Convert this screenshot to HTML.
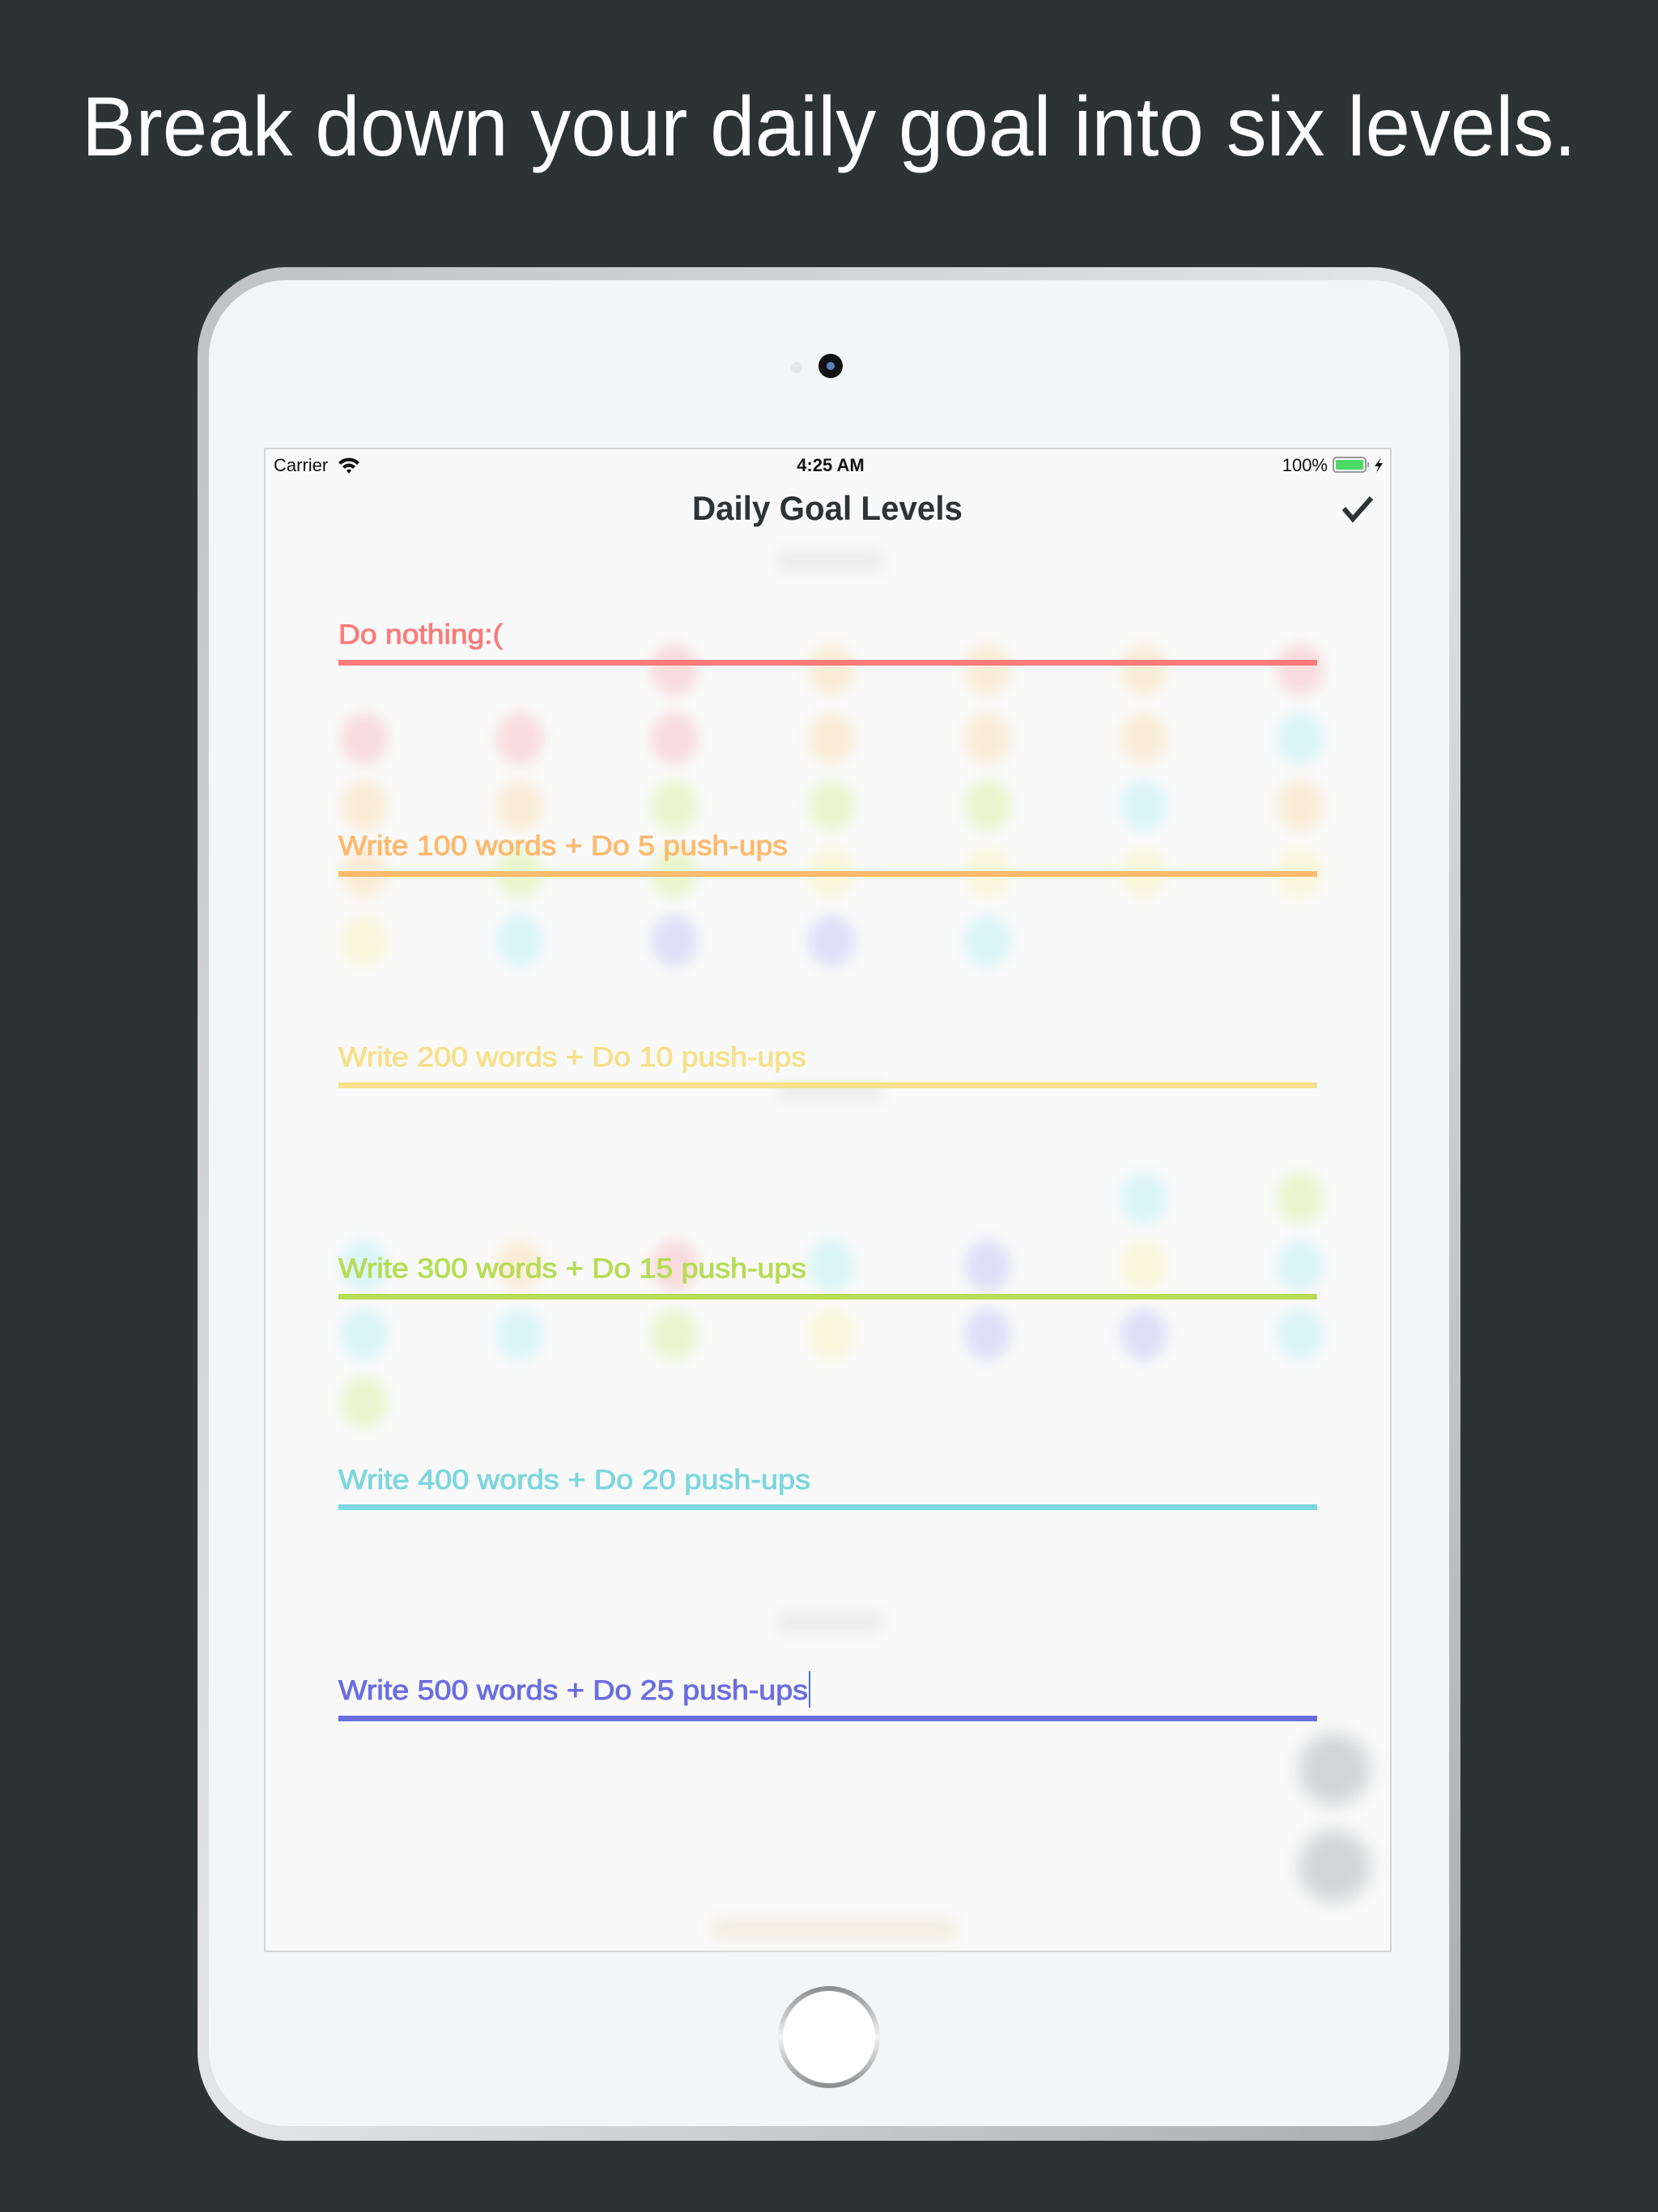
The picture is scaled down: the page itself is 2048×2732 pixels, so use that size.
<!DOCTYPE html>
<html><head><meta charset="utf-8"><style>
html,body{margin:0;padding:0}
body{width:2048px;height:2732px;background:#2c3335;position:relative;overflow:hidden;font-family:"Liberation Sans",sans-serif}
.abs{position:absolute}
</style></head><body>
<svg class="abs" style="left:0;top:0" width="2048" height="2732" viewBox="0 0 2048 2732">
<defs>
<linearGradient id="frame" x1="0" y1="0" x2="1" y2="1">
<stop offset="0" stop-color="#bfc1c3"/><stop offset="0.5" stop-color="#e4e5e6"/><stop offset="1" stop-color="#a9abad"/>
</linearGradient>
<linearGradient id="ring" x1="0" y1="0" x2="0" y2="1">
<stop offset="0" stop-color="#8a8b8d"/><stop offset="0.5" stop-color="#f2f2f2"/><stop offset="1" stop-color="#8a8b8d"/>
</linearGradient>
<filter id="bl" x="-50%" y="-50%" width="200%" height="200%"><feGaussianBlur stdDeviation="8"/></filter>
<filter id="bl2" x="-50%" y="-50%" width="200%" height="200%"><feGaussianBlur stdDeviation="11"/></filter>
</defs>
<text x="1024" y="192" text-anchor="middle" font-family="Liberation Sans" font-size="104" fill="#ffffff" textLength="1846" lengthAdjust="spacingAndGlyphs">Break down your daily goal into six levels.</text>
<rect x="244" y="330" width="1560" height="2314" rx="110" fill="url(#frame)"/>
<rect x="258" y="346" width="1532" height="2280" rx="96" fill="#f4f5f7"/>
<circle cx="984" cy="454" r="7" fill="#e6e7e9"/>
<circle cx="1026" cy="452" r="15" fill="#111"/>
<circle cx="1026" cy="452" r="5" fill="#5b7fc0"/>
<circle cx="1024" cy="2516" r="63" fill="url(#ring)"/>
<circle cx="1024" cy="2516" r="57" fill="#ffffff"/>
<rect x="327" y="554" width="1391" height="1856" fill="#f9f9f9" stroke="#d5d6d8" stroke-width="2"/>
<g filter="url(#bl)">
<ellipse cx="833" cy="827" rx="29" ry="32" fill="#f9dcdd"/>
<ellipse cx="1027" cy="827" rx="29" ry="32" fill="#faedd8"/>
<ellipse cx="1220" cy="827" rx="29" ry="32" fill="#faedd8"/>
<ellipse cx="1413" cy="827" rx="29" ry="32" fill="#faedd8"/>
<ellipse cx="1606" cy="827" rx="29" ry="32" fill="#f9dcdd"/>
<ellipse cx="450" cy="912" rx="29" ry="32" fill="#f9dcdd"/>
<ellipse cx="642" cy="912" rx="29" ry="32" fill="#f9dcdd"/>
<ellipse cx="833" cy="912" rx="29" ry="32" fill="#f9dcdd"/>
<ellipse cx="1027" cy="912" rx="29" ry="32" fill="#faedd8"/>
<ellipse cx="1220" cy="912" rx="29" ry="32" fill="#faedd8"/>
<ellipse cx="1413" cy="912" rx="29" ry="32" fill="#faedd8"/>
<ellipse cx="1606" cy="912" rx="29" ry="32" fill="#daf5f8"/>
<ellipse cx="450" cy="995" rx="29" ry="32" fill="#faedd8"/>
<ellipse cx="642" cy="995" rx="29" ry="32" fill="#faedd8"/>
<ellipse cx="833" cy="995" rx="29" ry="32" fill="#eaf6cf"/>
<ellipse cx="1027" cy="995" rx="29" ry="32" fill="#eaf6cf"/>
<ellipse cx="1220" cy="995" rx="29" ry="32" fill="#eaf6cf"/>
<ellipse cx="1413" cy="995" rx="29" ry="32" fill="#daf5f8"/>
<ellipse cx="1606" cy="995" rx="29" ry="32" fill="#faedd8"/>
<ellipse cx="450" cy="1078" rx="29" ry="32" fill="#faedd8"/>
<ellipse cx="642" cy="1078" rx="29" ry="32" fill="#eaf6cf"/>
<ellipse cx="833" cy="1078" rx="29" ry="32" fill="#eaf6cf"/>
<ellipse cx="1027" cy="1078" rx="29" ry="32" fill="#f9f7dc"/>
<ellipse cx="1220" cy="1078" rx="29" ry="32" fill="#f9f7dc"/>
<ellipse cx="1413" cy="1078" rx="29" ry="32" fill="#f9f7dc"/>
<ellipse cx="1606" cy="1078" rx="29" ry="32" fill="#f9f7dc"/>
<ellipse cx="450" cy="1162" rx="29" ry="32" fill="#f9f7dc"/>
<ellipse cx="642" cy="1162" rx="29" ry="32" fill="#daf5f8"/>
<ellipse cx="833" cy="1162" rx="29" ry="32" fill="#dfe0f8"/>
<ellipse cx="1027" cy="1162" rx="29" ry="32" fill="#dfe0f8"/>
<ellipse cx="1220" cy="1162" rx="29" ry="32" fill="#daf5f8"/>
<ellipse cx="1413" cy="1480" rx="29" ry="32" fill="#daf5f8"/>
<ellipse cx="1606" cy="1480" rx="29" ry="32" fill="#eaf6cf"/>
<ellipse cx="450" cy="1563" rx="29" ry="32" fill="#daf5f8"/>
<ellipse cx="642" cy="1563" rx="29" ry="32" fill="#faedd8"/>
<ellipse cx="833" cy="1563" rx="29" ry="32" fill="#f9dcdd"/>
<ellipse cx="1027" cy="1563" rx="29" ry="32" fill="#daf5f8"/>
<ellipse cx="1220" cy="1563" rx="29" ry="32" fill="#dfe0f8"/>
<ellipse cx="1413" cy="1563" rx="29" ry="32" fill="#f9f7dc"/>
<ellipse cx="1606" cy="1563" rx="29" ry="32" fill="#daf5f8"/>
<ellipse cx="450" cy="1648" rx="29" ry="32" fill="#daf5f8"/>
<ellipse cx="642" cy="1648" rx="29" ry="32" fill="#daf5f8"/>
<ellipse cx="833" cy="1648" rx="29" ry="32" fill="#eaf6cf"/>
<ellipse cx="1027" cy="1648" rx="29" ry="32" fill="#f9f7dc"/>
<ellipse cx="1220" cy="1648" rx="29" ry="32" fill="#dfe0f8"/>
<ellipse cx="1413" cy="1648" rx="29" ry="32" fill="#dfe0f8"/>
<ellipse cx="1606" cy="1648" rx="29" ry="32" fill="#daf5f8"/>
<ellipse cx="450" cy="1732" rx="29" ry="32" fill="#eaf6cf"/>
<rect x="960" y="680" width="130" height="26" fill="#ededee"/>
<rect x="960" y="1335" width="130" height="26" fill="#ededee"/>
<rect x="960" y="1990" width="130" height="26" fill="#ededee"/>
<rect x="880" y="2370" width="300" height="26" fill="#f3efe0"/>
</g>
<g filter="url(#bl2)">
<circle cx="1648" cy="2185" r="44" fill="#d2d4d6"/>
<circle cx="1648" cy="2305" r="44" fill="#d2d4d6"/>
</g>
<text x="338" y="582" font-size="22" fill="#111">Carrier</text>
<g transform="translate(418,565)" fill="#111">
<path d="M0 6 A18 18 0 0 1 26 6 L23 9 A14 14 0 0 0 3 9Z"/>
<path d="M5 11 A11 11 0 0 1 21 11 L18 14 A7 7 0 0 0 8 14Z"/>
<path d="M10 16 A4 4 0 0 1 16 16 L13 20Z"/>
</g>
<text x="1026" y="582" text-anchor="middle" font-size="22" font-weight="bold" fill="#111">4:25 AM</text>
<text x="1640" y="582" text-anchor="end" font-size="22" fill="#111">100%</text>
<rect x="1647" y="565" width="40" height="18" rx="4" fill="none" stroke="#999" stroke-width="2"/>
<rect x="1650" y="568" width="34" height="12" rx="2" fill="#4cd964"/>
<rect x="1689" y="571" width="2" height="6" fill="#999"/>
<path d="M1706 565 L1698 576 L1703 576 L1700 584 L1708 572 L1703 572Z" fill="#111"/>
<text x="1022" y="642" text-anchor="middle" font-size="42" font-weight="bold" fill="#2e3335" textLength="334" lengthAdjust="spacingAndGlyphs">Daily Goal Levels</text>
<path d="M1660 628 L1671 641 L1694 615" fill="none" stroke="#2e3335" stroke-width="6"/>
<g font-size="34" stroke-width="0.9">
<text x="418" y="795" fill="#fb7a7a" stroke="#fb7a7a" textLength="203" lengthAdjust="spacingAndGlyphs">Do nothing:(</text>
<rect x="418" y="815" width="1209" height="7" fill="#ff7a7a" stroke="none"/>
<text x="418" y="1056" fill="#ffb86b" stroke="#ffb86b" textLength="555" lengthAdjust="spacingAndGlyphs">Write 100 words + Do 5 push-ups</text>
<rect x="418" y="1076" width="1209" height="7" fill="#ffbb6e" stroke="none"/>
<text x="418" y="1317" fill="#f7e08a" stroke="#f7e08a" textLength="578" lengthAdjust="spacingAndGlyphs">Write 200 words + Do 10 push-ups</text>
<rect x="418" y="1337" width="1209" height="7" fill="#f7e08a" stroke="none"/>
<text x="418" y="1578" fill="#b5dc55" stroke="#b5dc55" textLength="578" lengthAdjust="spacingAndGlyphs">Write 300 words + Do 15 push-ups</text>
<rect x="418" y="1598" width="1209" height="7" fill="#b8dd55" stroke="none"/>
<text x="418" y="1839" fill="#7dd6de" stroke="#7dd6de" textLength="583" lengthAdjust="spacingAndGlyphs">Write 400 words + Do 20 push-ups</text>
<rect x="418" y="1858" width="1209" height="7" fill="#7dd8df" stroke="none"/>
<text x="418" y="2099" fill="#6a6ee0" stroke="#6a6ee0" textLength="580" lengthAdjust="spacingAndGlyphs">Write 500 words + Do 25 push-ups</text>
<rect x="999" y="2064" width="2" height="45" fill="#4a6ee0" stroke="none"/>
<rect x="418" y="2119" width="1209" height="7" fill="#6a6ee0" stroke="none"/>
</g>
</svg>
</body></html>
